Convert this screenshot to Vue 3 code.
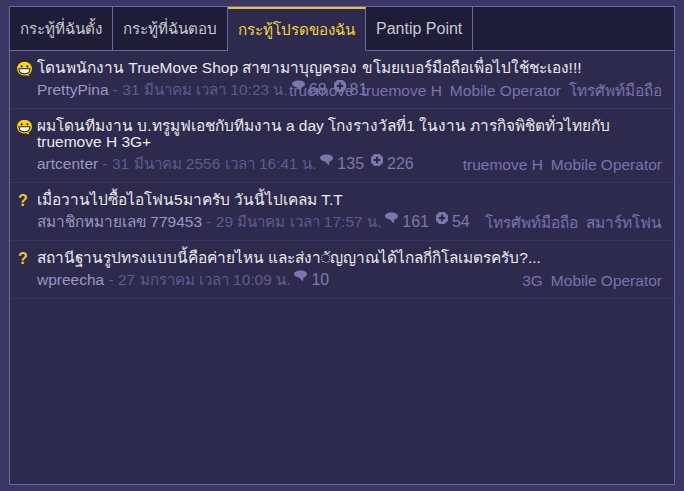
<template>
  <div class="page">
    <div class="panel">
      <div class="tabs">
        <div
          v-for="tab in tabs"
          :key="tab.label"
          class="tab"
          :class="{ active: tab.active }"
        >
          <span v-for="(run, i) in runs(tab.label)" :key="i" :class="{ thai: run.thai }">{{ run.text }}</span>
        </div>
        <div class="tab-rest"></div>
      </div>

      <div class="topics">
        <div v-for="topic in topics" :key="topic.title" class="topic">
          <div class="topic-icon">
            <svg v-if="topic.icon === 'smile'" width="19" height="19" viewBox="0 0 18 18">
              <path d="M9 1.2c4.4 0 7.600 3 7.600 7 0 2.600-1.200 4.600-3.200 5.800l1.200 2.600-4-1.500c-.6.1-1 .1-1.600.1-4.400 0-7.600-3-7.600-7s3.200-7 7.600-7z" fill="#fbd22e" stroke="#3a2c10" stroke-width="1.100" />
              <circle cx="6.300" cy="6" r="1" fill="#2a2008" />
              <circle cx="11.700" cy="6" r="1" fill="#2a2008" />
              <path d="M3.800 8.200h10.400c0 3-2.300 4.800-5.200 4.800s-5.200-1.800-5.200-4.800z" fill="#fff" stroke="#2a2008" stroke-width="1" />
            </svg>
            <span v-else class="question">?</span>
          </div>
          <div class="topic-body">
            <div class="title">
              <span v-for="(run, i) in runs(topic.title)" :key="i" :class="{ thai: run.thai }">{{ run.text }}</span>
            </div>
            <div class="details">
              <div class="meta">
                <span class="author">
                  <span v-for="(run, i) in runs(topic.author)" :key="i" :class="{ thai: run.thai }">{{ run.text }}</span>
                </span>
                <span class="time">
                  - <span v-for="(run, i) in runs(topic.time)" :key="i" :class="{ thai: run.thai }">{{ run.text }}</span>
                </span>
                <span class="stat">
                  <svg class="stat-icon" width="13" height="12" viewBox="0 0 14 12"><path d="M7 0c3.800 0 7 1.500 7 3.800 0 2-2 3.300-3.800 3.700L9.500 12 5.600 7.500C2.500 7.200 0 5.800 0 3.800 0 1.500 3.200 0 7 0z" fill="#7d76ad" /></svg>{{ topic.comments }}</span>
                <span v-if="topic.plus" class="stat plus">
                  <svg class="stat-icon" width="12" height="12" viewBox="0 0 13 13"><path d="M4 0h5l4 4v5l-4 4H4L0 9V4z" fill="#7d76ad" stroke="#7d76ad" stroke-linejoin="round" /><path d="M6.500 3v7M3 6.500h7" stroke="#2a2648" stroke-width="2.200" /></svg>{{ topic.plus }}</span>
              </div>
              <div class="tags">
                <span v-for="tag in topic.tags" :key="tag">
                  <span v-for="(run, i) in runs(tag)" :key="i" :class="{ thai: run.thai }">{{ run.text }}</span>
                </span>
              </div>
            </div>
          </div>
        </div>
      </div>
    </div>
  </div>
</template>

<script setup>
// Thai glyphs come out wider here than in the original font, so they get their own size
const runs = (text) =>
  (text.match(/[\u0E00-\u0E7F\u25CC]+(?:\s+(?=[\u0E00-\u0E7F]))?|[^\u0E00-\u0E7F\u25CC]+/g) || []).map((part) => ({
    text: part,
    thai: /[\u0E00-\u0E7F]/.test(part)
  }))

const tabs = [
  { label: 'กระทู้ที่ฉันตั้ง' },
  { label: 'กระทู้ที่ฉันตอบ' },
  { label: 'กระทู้โปรดของฉัน', active: true },
  { label: 'Pantip Point' }
]

const topics = [
  {
    icon: 'smile',
    title: 'โดนพนักงาน TrueMove Shop สาขามาบุญครอง ขโมยเบอร์มือถือเพื่อไปใช้ชะเอง!!!',
    author: 'PrettyPina',
    time: '31 มีนาคม เวลา 10:23 น.',
    comments: 68,
    plus: 81,
    tags: ['truemove', 'truemove H', 'Mobile Operator', 'โทรศัพท์มือถือ']
  },
  {
    icon: 'smile',
    title: 'ผมโดนทีมงาน บ.ทรูมูฟเอชกับทีมงาน a day โกงรางวัลที่1 ในงาน ภารกิจพิชิตทั่วไทยกับ truemove H 3G+',
    author: 'artcenter',
    time: '31 มีนาคม 2556 เวลา 16:41 น.',
    comments: 135,
    plus: 226,
    tags: ['truemove H', 'Mobile Operator']
  },
  {
    icon: 'question',
    title: 'เมื่อวานไปซื้อไอโฟน5มาครับ วันนี้ไปเคลม T.T',
    author: 'สมาชิกหมายเลข 779453',
    time: '29 มีนาคม เวลา 17:57 น.',
    comments: 161,
    plus: 54,
    tags: ['โทรศัพท์มือถือ', 'สมาร์ทโฟน']
  },
  {
    icon: 'question',
    title: 'สถานีฐานรูปทรงแบบนี้คือค่ายไหน และส่งา◌ัญญาณได้ไกลกี่กิโลเมตรครับ?...',
    author: 'wpreecha',
    time: '27 มกราคม เวลา 10:09 น.',
    comments: 10,
    tags: ['3G', 'Mobile Operator']
  }
]
</script>

<style>
html,
body {
  margin: 0;
  background: #3b3663;
}
</style>

<style scoped>
.page {
  width: 684px;
  height: 491px;
  box-sizing: border-box;
  padding: 6px 9px 6px 9px;
  overflow: hidden;
  background: #3b3663;
  font-family: "Liberation Sans", Arial, sans-serif;
  font-size: 16px;
}

.panel {
  height: 100%;
  box-sizing: border-box;
  border: 1px solid #6c68a4;
  background: #2e2a4e;
}

.tabs {
  display: flex;
  height: 44px;
  box-sizing: border-box;
  background: #1f1c38;
}

.tab {
  padding: 0 10px;
  line-height: 44px;
  color: #c9c9d2;
  border-right: 1px solid #6c68a4;
  border-bottom: 1px solid #6c68a4;
  white-space: nowrap;
}

.tab .thai {
  font-size: 15.200px;
}

.tab.active {
  color: #f2d53c;
  background: #2e2a4e;
  border-bottom-color: transparent;
  border-top: 2px solid #e2c52f;
  line-height: 42px;
}

.tab-rest {
  flex: 1;
  border-bottom: 1px solid #6c68a4;
}

.topic {
  display: flex;
  gap: 2px;
  min-height: 58px;
  padding: 9px 12px 0 5px;
  box-sizing: border-box;
  border-bottom: 1px solid #38345a;
}

.topic-icon {
  width: 20px;
  flex: none;
  display: flex;
}

.question {
  margin-left: 3px;
  font-weight: bold;
  color: #f5c531;
  line-height: 18px;
}

.topic-body {
  flex: 1;
  min-width: 0;
}

.title {
  color: #e9e9ef;
  font-size: 15.500px;
  line-height: 16px;
}

.title .thai {
  font-size: 15.400px;
}

.details {
  display: grid;
  margin-top: 4px;
  padding-bottom: 8.500px;
}

.meta,
.tags {
  grid-area: 1 / 1;
  line-height: 18px;
  font-size: 15.500px;
}

.meta {
  color: #5f5b8e;
}

.author {
  color: #9a97c4;
}

.author .thai {
  font-size: 15.300px;
}

.time .thai {
  font-size: 15px;
}

.stat {
  margin-left: 4px;
  color: #7d79ab;
  font-size: 16px;
}

.stat.plus {
  margin-left: 7px;
}

.stat-icon {
  vertical-align: 3px;
  margin-right: 4px;
}

.tags {
  justify-self: end;
  align-self: end;
  display: flex;
  gap: 8px;
  color: #7872ad;
  transform: translateY(1px);
}

.tags .thai {
  font-size: 15.400px;
}
</style>
